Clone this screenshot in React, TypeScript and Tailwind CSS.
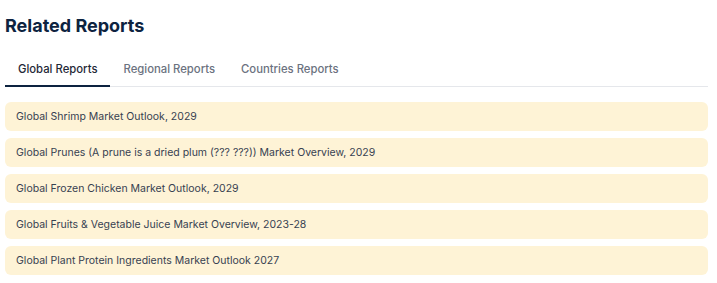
import { useState } from 'react';

const tabs = ['Global Reports', 'Regional Reports', 'Countries Reports'];

const reports = [
    'Global Shrimp Market Outlook, 2029',
    'Global Prunes (A prune is a dried plum (??? ???)) Market Overview, 2029',
    'Global Frozen Chicken Market Outlook, 2029',
    'Global Fruits & Vegetable Juice Market Overview, 2023-28',
    'Global Plant Protein Ingredients Market Outlook 2027',
];

export default function App() {
    const [active, setActive] = useState(0);

    return (
        <div className="w-[717px] h-[283px] bg-white px-[5px] pt-[14px] font-['Inter',sans-serif]">
            <h2 className="text-[18px] leading-[24px] font-bold text-[#0d2340]">Related Reports</h2>

            <div className="mt-[20px] w-[703px] flex border-b border-[#e5e7eb]">
                {tabs.map((t, i) => (
                    <button
                        key={t}
                        onClick={() => setActive(i)}
                        className={
                            i === active
                                ? 'px-[13px] pb-[8px] pt-[3px] text-[11.3px] leading-[16px] font-medium text-[#1f2937] border-b-2 border-[#0d2340] -mb-px'
                                : 'px-[13px] pb-[8px] pt-[3px] text-[11.3px] leading-[16px] font-medium text-[#6b7280] border-b-2 border-transparent -mb-px'
                        }
                    >
                        {t}
                    </button>
                ))}
            </div>

            <div className="mt-[15px] w-[703px] flex flex-col gap-[7px]">
                {reports.map((r) => (
                    <div key={r} className="h-[29px] flex items-center px-[11px] rounded-[6px] bg-[#fef3d6] text-[10.5px] text-[#374151]">
                        {r}
                    </div>
                ))}
            </div>
        </div>
    );
}
